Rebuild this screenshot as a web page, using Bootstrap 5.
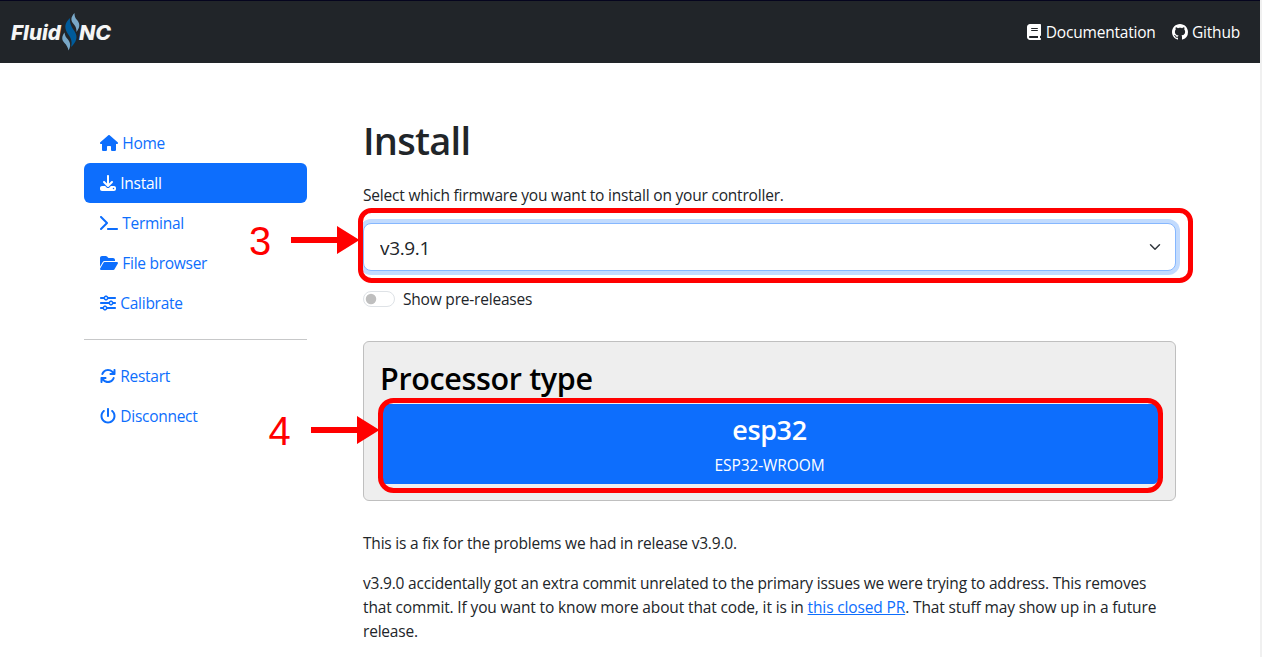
<!DOCTYPE html>
<html lang="en">
<head>
    <meta charset="utf-8">
    <title>FluidNC Web Installer</title>
    <link href="https://cdn.jsdelivr.net/npm/bootstrap@5.3.3/dist/css/bootstrap.min.css" rel="stylesheet">
    <script src="https://cdn.jsdelivr.net/npm/bootstrap@5.3.3/dist/js/bootstrap.bundle.min.js"></script>
    <style>
        body {
            font-family: "Open Sans", "Noto Sans", sans-serif;
            font-size: 15.5px;
            line-height: 24px;
            letter-spacing: -0.2px;
            height: 657px;
            overflow: hidden;
            border-right: 2px solid #f0f0f0;
        }
        .top-bar { height: 63px; border-top: 1px solid #05051e; padding: 0 20px 0 10px; }
        .icon { height: 16px; width: auto; fill: currentColor; vertical-align: -2px; margin-right: 0.5px; }
        .page { max-width: 1140px; padding-top: 54px; }
        .side-menu { margin: 6px 32px 0 0; }
        .side-menu .nav-link { height: 40px; white-space: nowrap; font-size: 15.5px; letter-spacing: -0.27px; }
        .side-menu hr { margin: 16px 0; color: #212529; }
        h1 { font-size: 38px; font-weight: 600; line-height: 46px; letter-spacing: -0.75px; margin-bottom: 20px; }
        h2 { font-size: 30.5px; font-weight: 600; line-height: 38.4px; letter-spacing: -0.35px; color: #000; padding-top: 1px; margin-bottom: 7px; }
        h3 { font-size: 27px; font-weight: 600; line-height: 33.6px; letter-spacing: -0.4px; padding-top: 2px; margin-bottom: 6px; }
        .version-select, .version-select:focus {
            height: 48px;
            padding: 9px 48px 7px 16px;
            font-size: 19px;
            letter-spacing: -0.35px;
            border-color: #86b7fe;
            box-shadow: 0 0 0 4px #c2dbfe;
        }
        .form-switch { padding-left: 40px; }
        .form-switch .form-check-input { width: 32px; height: 16px; margin: 4px 0 0 -40px; }
        .processor-card { background: #eee; border-color: #bfbfbf; margin: 30px 0; }
        .processor-card .card-body { padding: 16px; }
        .processor-card .btn { font-size: 15.5px; line-height: 24px; letter-spacing: -0.1px; }
        .loose-line { letter-spacing: -0.14px; }
        .annotations { inset: 0; width: 1262px; height: 657px; pointer-events: none; z-index: 10; }
        .annotations text { font: 40px "Liberation Sans", sans-serif; letter-spacing: 0; }
        .logo text { font: italic 800 20.5px Inter, sans-serif; letter-spacing: 0; }
    </style>
</head>
<body class="position-relative">
    <header class="top-bar bg-dark text-white d-flex align-items-center justify-content-between">
        <a href="#" class="d-block lh-1">
            <svg class="logo" width="104" height="40" viewBox="0 0 104 40">
                <text x="1" y="27.500" fill="#f5f5f5" textLength="50" lengthAdjust="spacingAndGlyphs">Fluid</text>
                <path fill="#79a8c8" d="M64.500 1c-4 4.500-4 7.500-.5 11.500 2 2.500 2.500 4.500 2.500 7.500 3-4 4-7.500 1-11.500-2.500-2.500-3-4.500-3-7.500z" />
                <path fill="#79a8c8" d="M54.500 20.500c-3 4-3 7.500 0 10.500 2 2 3.500 4.500 4 7.500 2.500-4 2-8-.5-11-2.500-2.500-3-4-3.500-7z" />
                <path fill="#005b9a" d="M60 6c-5 5-6 9-3 14.500 3 4.500 6 8 4 14.500 5.500-5 7-10 4-15-3-4.500-5.500-8-5-14z" />
                <text x="69" y="27.500" fill="#f5f5f5" textLength="32" lengthAdjust="spacingAndGlyphs">NC</text>
            </svg>
        </a>
        <nav class="d-flex gap-3">
            <a href="#" class="text-white text-decoration-none"><svg class="icon" viewBox="0 0 448 512"><path d="M96 0C43 0 0 43 0 96V416c0 53 43 96 96 96H384h32c17.7 0 32-14.3 32-32s-14.3-32-32-32V384c17.7 0 32-14.3 32-32V32c0-17.7-14.3-32-32-32H384 96zm0 384H352v64H96c-17.7 0-32-14.3-32-32s14.3-32 32-32zm32-240c0-8.8 7.2-16 16-16H336c8.8 0 16 7.2 16 16s-7.2 16-16 16H144c-8.8 0-16-7.2-16-16zm16 48H336c8.8 0 16 7.2 16 16s-7.2 16-16 16H144c-8.8 0-16-7.2-16-16s7.2-16 16-16z" /></svg> <span>Documentation</span></a>
            <a href="#" class="text-white text-decoration-none"><svg class="icon" viewBox="0 0 16 16"><path d="M8 0C3.58 0 0 3.58 0 8c0 3.54 2.29 6.53 5.47 7.59.4.07.55-.17.55-.38 0-.19-.01-.82-.01-1.49-2.01.37-2.53-.49-2.69-.94-.09-.23-.48-.94-.82-1.13-.28-.15-.68-.52-.01-.53.63-.01 1.08.58 1.23.82.72 1.21 1.87.87 2.33.66.07-.52.28-.87.51-1.07-1.78-.2-3.64-.89-3.64-3.95 0-.87.31-1.59.82-2.15-.08-.2-.36-1.02.08-2.12 0 0 .67-.21 2.2.82.64-.18 1.32-.27 2-.27s1.36.09 2 .27c1.53-1.04 2.2-.82 2.2-.82.44 1.1.16 1.92.08 2.12.51.56.82 1.27.82 2.15 0 3.07-1.87 3.75-3.65 3.95.29.25.54.73.54 1.48 0 1.07-.01 1.93-.01 2.2 0 .21.15.46.55.38A8.01 8.01 0 0 0 16 8c0-4.42-3.58-8-8-8" /></svg> <span>Github</span></a>
        </nav>
    </header>

    <main class="container page">
        <div class="row mx-0">
            <!-- Side menu -->
            <div class="col-3">
                <div class="side-menu">
                    <nav class="nav nav-pills flex-column">
                        <a class="nav-link" href="#"><svg class="icon" viewBox="0 0 576 512"><path d="M575.8 255.5c0 18-15 32.1-32 32.1l-32 0 .7 160.2c0 2.7-.2 5.4-.5 8.1l0 16.2c0 22.1-17.9 40-40 40l-16 0c-1.1 0-2.2 0-3.3-.1c-1.4 .1-2.8 .1-4.2 .1L416 512l-24 0c-22.1 0-40-17.9-40-40l0-24 0-64c0-17.7-14.3-32-32-32l-64 0c-17.7 0-32 14.3-32 32l0 64 0 24c0 22.1-17.9 40-40 40l-24 0-31.9 0c-1.5 0-3-.1-4.5-.2c-1.2 .1-2.4 .2-3.6 .2l-16 0c-22.1 0-40-17.9-40-40l0-112c0-.9 0-1.9 .1-2.8l0-69.7-32 0c-18 0-32-14-32-32.1c0-9 3-17 10-24L266.4 8c7-7 15-8 22-8s15 2 21 7L564.8 231.5c8 7 12 15 11 24z" /></svg> Home</a>
                        <a class="nav-link active" href="#"><svg class="icon" viewBox="0 0 512 512"><path d="M288 32c0-17.7-14.3-32-32-32s-32 14.3-32 32V274.7l-73.4-73.4c-12.5-12.5-32.8-12.5-45.3 0s-12.5 32.8 0 45.3l128 128c12.5 12.5 32.8 12.5 45.3 0l128-128c12.5-12.5 12.5-32.8 0-45.3s-32.8-12.5-45.3 0L288 274.7V32zM64 352c-35.3 0-64 28.7-64 64v32c0 35.3 28.7 64 64 64H448c35.3 0 64-28.7 64-64V416c0-35.3-28.7-64-64-64H346.5l-45.3 45.3c-25 25-65.5 25-90.5 0L165.5 352H64zm368 56a24 24 0 1 1 0 48 24 24 0 1 1 0-48z" /></svg> Install</a>
                        <a class="nav-link" href="#"><svg class="icon" viewBox="0 0 576 512"><path d="M9.4 86.6C-3.1 74.1-3.1 53.9 9.4 41.4s32.8-12.5 45.3 0l192 192c12.5 12.5 12.5 32.8 0 45.3l-192 192c-12.5 12.5-32.8 12.5-45.3 0s-12.5-32.8 0-45.3L178.7 256 9.4 86.6zM256 416H544c17.7 0 32 14.3 32 32s-14.3 32-32 32H256c-17.7 0-32-14.3-32-32s14.3-32 32-32z" /></svg> Terminal</a>
                        <a class="nav-link" href="#"><svg class="icon" viewBox="0 0 576 512"><path d="M88.7 223.8L0 375.8V96C0 60.7 28.7 32 64 32H181.5c17 0 33.3 6.7 45.3 18.7l26.5 26.5c12 12 28.3 18.7 45.3 18.7H416c35.3 0 64 28.7 64 64v32H144c-22.8 0-43.8 12.1-55.3 31.8zm27.6 16.1C122.1 230 132.6 224 144 224H544c11.5 0 22 6.1 27.7 16.1s5.7 22.2-.1 32.1l-112 192C453.9 474 443.4 480 432 480H32c-11.5 0-22-6.1-27.7-16.1s-5.7-22.2 .1-32.1l112-192z" /></svg> File browser</a>
                        <a class="nav-link" href="#"><svg class="icon" viewBox="0 0 512 512"><path d="M0 416c0 17.7 14.3 32 32 32l54.7 0c12.3 28.3 40.5 48 73.3 48s61-19.7 73.3-48L480 448c17.7 0 32-14.3 32-32s-14.3-32-32-32l-246.7 0c-12.3-28.3-40.5-48-73.3-48s-61 19.7-73.3 48L32 384c-17.7 0-32 14.3-32 32zm128 0a32 32 0 1 1 64 0 32 32 0 1 1 -64 0zM320 256a32 32 0 1 1 64 0 32 32 0 1 1 -64 0zm32-80c-32.8 0-61 19.7-73.3 48L32 224c-17.7 0-32 14.3-32 32s14.3 32 32 32l246.7 0c12.3 28.3 40.5 48 73.3 48s61-19.7 73.3-48l54.7 0c17.7 0 32-14.3 32-32s-14.3-32-32-32l-54.7 0c-12.3-28.3-40.5-48-73.3-48zM192 128a32 32 0 1 1 0-64 32 32 0 1 1 0 64zm73.3-64C253 35.7 224.8 16 192 16s-61 19.7-73.3 48L32 64C14.3 64 0 78.3 0 96s14.3 32 32 32l86.7 0c12.3 28.3 40.5 48 73.3 48s61-19.7 73.3-48L480 128c17.7 0 32-14.3 32-32s-14.3-32-32-32L265.3 64z" /></svg> Calibrate</a>
                    </nav>
                    <hr>
                    <nav class="nav nav-pills flex-column">
                        <a class="nav-link" href="#"><svg class="icon" viewBox="0 0 512 512"><path d="M105.1 202.6c7.7-21.8 20.2-42.3 37.8-59.8c62.5-62.5 163.8-62.5 226.3 0L386.3 160H336c-17.7 0-32 14.3-32 32s14.3 32 32 32H463.5c0 0 0 0 0 0h.4c17.7 0 32-14.3 32-32V64c0-17.7-14.3-32-32-32s-32 14.3-32 32v51.2L414.4 97.6c-87.5-87.5-229.3-87.5-316.8 0C73.2 122 55.6 150.7 44.8 181.4c-5.9 16.7 2.9 34.9 19.5 40.8s34.9-2.9 40.8-19.5zM39 289.3c-5 1.5-9.8 4.2-13.7 8.2c-4 4-6.7 8.8-8.1 14c-.3 1.2-.6 2.5-.8 3.8c-.3 1.7-.4 3.4-.4 5.1V448c0 17.7 14.3 32 32 32s32-14.3 32-32V396.9l17.6 17.5 0 0c87.5 87.4 229.3 87.4 316.7 0c24.4-24.4 42.1-53.1 52.9-83.7c5.9-16.7-2.9-34.9-19.5-40.8s-34.9 2.9-40.8 19.5c-7.7 21.8-20.2 42.3-37.8 59.8c-62.5 62.5-163.8 62.5-226.3 0l-.1-.1L125.6 352H176c17.7 0 32-14.3 32-32s-14.3-32-32-32H48.4c-1.6 0-3.2 .1-4.8 .3s-3.1 .5-4.6 1z" /></svg> Restart</a>
                        <a class="nav-link" href="#"><svg class="icon" viewBox="0 0 512 512"><path d="M288 32c0-17.7-14.3-32-32-32s-32 14.3-32 32V256c0 17.7 14.3 32 32 32s32-14.3 32-32V32zM143.5 120.6c13.6-11.3 15.4-31.5 4.1-45.1s-31.5-15.4-45.1-4.1C49.7 115.4 16 181.8 16 256c0 132.5 107.5 240 240 240s240-107.5 240-240c0-74.2-33.8-140.6-86.6-184.6c-13.6-11.3-33.8-9.4-45.1 4.1s-9.4 33.8 4.1 45.1c38.9 32.3 63.5 81 63.5 135.4c0 97.2-78.8 176-176 176s-176-78.8-176-176c0-54.4 24.7-103.1 63.5-135.4z" /></svg> Disconnect</a>
                    </nav>
                </div>
            </div>

            <!-- Firmware selection -->
            <div class="col-9">
                <h1>Install</h1>
                <p>Select which firmware you want to install on your controller.</p>
                <select class="form-select form-select-lg version-select" aria-label="Firmware version">
                    <option selected>v3.9.1</option>
                </select>
                <div class="form-check form-switch mt-3 mb-0">
                    <input class="form-check-input" type="checkbox" role="switch" id="preReleases">
                    <label class="form-check-label" for="preReleases">Show pre-releases</label>
                </div>

                <div class="card processor-card">
                    <div class="card-body">
                        <h2>Processor type</h2>
                        <button type="button" class="btn btn-primary w-100">
                            <h3>esp32</h3>
                            <div>ESP32-WROOM</div>
                        </button>
                    </div>
                </div>

                <p>This is a fix for the problems we had in release v3.9.0.</p>
                <p class="mb-0">v3.9.0 accidentally got an extra commit unrelated to the primary issues we were trying to address. This removes<br>
                    <span class="loose-line">that commit. If you want to know more about that code, it is in <a href="#">this closed PR</a>. That stuff may show up in a future</span><br>
                    release.</p>
            </div>
        </div>
    </main>

    <!-- Numbered steps drawn over the page -->
    <svg class="annotations position-absolute" viewBox="0 0 1262 657" fill="red">
        <rect x="360.5" y="210.5" width="830" height="70" rx="11" fill="none" stroke="red" stroke-width="5" />
        <path d="M291 237h46v-11l22.500 14-22.500 14v-11h-46z" />
        <text x="249" y="254.500">3</text>
        <rect x="380.5" y="400.5" width="780" height="90" rx="13" fill="none" stroke="red" stroke-width="5" />
        <path d="M311 427h46v-11l22.500 14-22.500 14v-11h-46z" />
        <text x="268.500" y="445">4</text>
    </svg>
</body>
</html>
